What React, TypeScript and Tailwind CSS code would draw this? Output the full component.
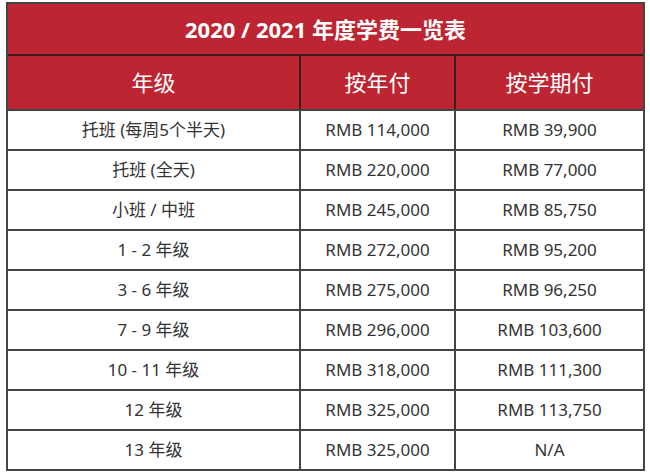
const rows = [
  ["托班 (每周5个半天)", "RMB 114,000", "RMB 39,900"],
  ["托班 (全天)", "RMB 220,000", "RMB 77,000"],
  ["小班 / 中班", "RMB 245,000", "RMB 85,750"],
  ["1 - 2 年级", "RMB 272,000", "RMB 95,200"],
  ["3 - 6 年级", "RMB 275,000", "RMB 96,250"],
  ["7 - 9 年级", "RMB 296,000", "RMB 103,600"],
  ["10 - 11 年级", "RMB 318,000", "RMB 111,300"],
  ["12 年级", "RMB 325,000", "RMB 113,750"],
  ["13 年级", "RMB 325,000", "N/A"],
];

const font = {
  fontFamily: '"Noto Sans", "Noto Sans CJK SC", sans-serif',
};

const App = () => {
  return (
    <div className="min-h-screen bg-white pl-[6px] pt-[2px]" style={font}>
      <div className="w-[639px] border-2 border-[#444]">
        {/* title */}
        <div className="h-[50px] bg-[#be2532] flex items-center justify-center text-white text-[22px] font-bold">
          2020 / 2021 年度学费一览表
        </div>
        {/* header */}
        <div className="grid grid-cols-[291px_155px_1fr] h-[55px] border-t-2 border-[#3a1a1c] bg-[#be2532] text-white text-[22px]">
          <div className="flex items-center justify-center">年级</div>
          <div className="flex items-center justify-center border-l-2 border-[#3a1a1c]">按年付</div>
          <div className="flex items-center justify-center border-l-2 border-[#3a1a1c]">按学期付</div>
        </div>
        {rows.map((r, i) => (
          <div
            key={i}
            className="grid grid-cols-[291px_155px_1fr] h-[40px] border-t-2 border-[#444] text-[17px] text-[#333]"
          >
            <div className="flex items-center justify-center">{r[0]}</div>
            <div className="flex items-center justify-center border-l-2 border-[#444]">{r[1]}</div>
            <div className="flex items-center justify-center border-l-2 border-[#444]">{r[2]}</div>
          </div>
        ))}
      </div>
    </div>
  );
};

export default App;
